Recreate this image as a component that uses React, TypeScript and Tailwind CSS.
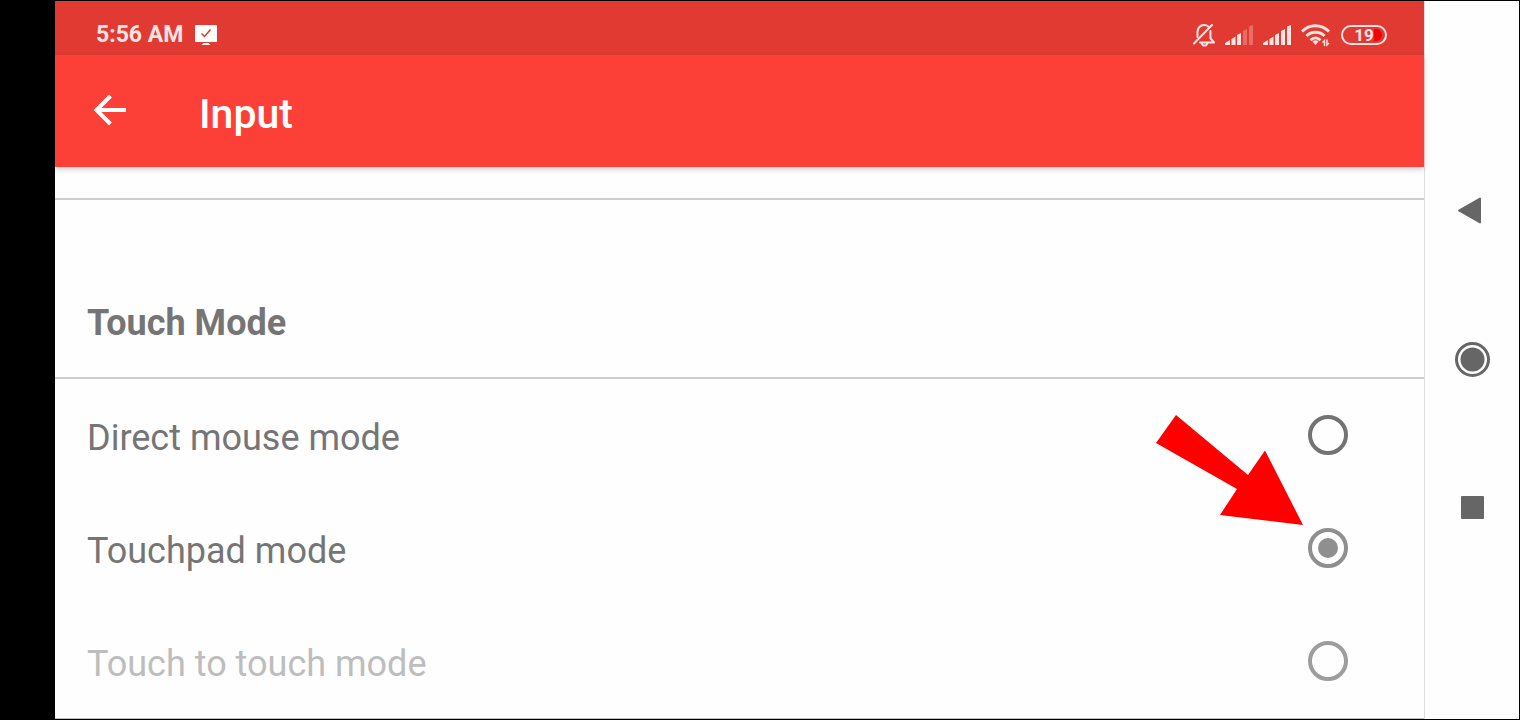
import React, { useState } from "react";

const modes = [
  {
    id: "direct",
    label: "Direct mouse mode",
    text: "text-[#757575]",
    ring: "border-[#737373] before:bg-[#737373]",
  },
  {
    id: "touchpad",
    label: "Touchpad mode",
    text: "text-[#757575]",
    ring: "border-[#8f8f8f] before:bg-[#8f8f8f]",
  },
  {
    id: "touch",
    label: "Touch to touch mode",
    text: "text-[#bdbdbd]",
    ring: "border-[#9d9d9d] before:bg-[#9d9d9d]",
  },
];

function ScreenIcon() {
  return (
    <svg width="22" height="22" viewBox="0 0 22 22" fill="none">
      <rect width="22" height="17" y="1" rx="1" fill="#fff" />
      <path d="M8.500 19h5l2 2h-9z" fill="#fff" />
      <path d="M6.500 9.500l3 3 6-7" stroke="#e03a32" strokeWidth="1.500" />
    </svg>
  );
}

function BellOffIcon() {
  return (
    <svg
      width="22"
      height="24"
      viewBox="0 0 22 24"
      fill="none"
      stroke="#fce4e2"
      strokeWidth="2"
      strokeLinecap="round"
      strokeLinejoin="round"
    >
      <path d="M4.500 14V9c0-4 2.800-7 6.500-7 1.800 0 3.400.6 4.500 1.800" />
      <path d="M17.500 8v7.500l3.500 4H7" />
      <path d="M1 20.500L19 2" />
      <path d="M8.500 20l1.500 2.500h3l1.500-2.500" />
    </svg>
  );
}

function SignalIcon({ bars }: { bars: number }) {
  return (
    <svg width="28" height="20" viewBox="0 0 28 20" fill="#fce4e2">
      <path d="M0 20v-2L5 15v5z" />
      <path d="M6.500 14l4-2.500V20h-4z" />
      <path d="M12 10l4-2v12h-4z" />
      <path d="M18 6l4-2v16h-4z" opacity={bars > 3 ? 1 : 0.3} />
      <path d="M24 1.500l4-1.500v20h-4z" opacity={bars > 4 ? 1 : 0.3} />
    </svg>
  );
}

function WifiIcon() {
  return (
    <svg width="30" height="24" viewBox="0 0 30 24" fill="none">
      <g stroke="#fce4e2" strokeWidth="3">
        <path d="M1 8.500C8.500.8 20 .8 28 8.500" />
        <path d="M5.500 13c5-5 13-5 18 0" />
        <path d="M9.500 17.200c3-3 7-3 10 0" />
      </g>
      <path d="M11.500 18.500c2-1.800 4-1.800 6 0l-3 3.500z" fill="#fce4e2" />
      <path
        d="M21.500 19.500l2-2v5.500M28 20l-2 2v-5.500"
        stroke="#fce4e2"
        strokeWidth="1.500"
      />
    </svg>
  );
}

function StatusBar() {
  return (
    <div className="flex h-[54px] items-center justify-between bg-[#e03a32] pl-[41px] pr-[37px] pt-[14px]">
      <div className="flex items-center gap-3">
        <span className="text-[23px] leading-7 font-bold text-[#fce4e2]">
          5:56 AM
        </span>
        <ScreenIcon />
      </div>
      <div className="flex items-center gap-[10px]">
        <BellOffIcon />
        <SignalIcon bars={3} />
        <SignalIcon bars={5} />
        <WifiIcon />
        <div className="relative flex h-5 w-[46px] items-center justify-center rounded-full border-2 border-[#fce4e2]">
          <span className="absolute right-[3px] h-3 w-2 rounded-r-full bg-[#f00000]"></span>
          <span className="relative text-[17px] leading-4 font-bold text-[#fce4e2]">
            19
          </span>
        </div>
      </div>
    </div>
  );
}

function Toolbar() {
  return (
    <header className="relative flex h-[112px] items-center bg-[#fd4037] pb-[2px] pl-[38px] shadow-[0_2px_6px_rgba(0,0,0,0.2)]">
      <button type="button" aria-label="Back" className="mr-[72px]">
        <svg width="34" height="34" viewBox="0 0 34 34" fill="none">
          <path
            d="M33 17H4M17.500 3L3.500 17l14 14"
            stroke="#fff"
            strokeWidth="4"
          />
        </svg>
      </button>
      <h1 className="pt-2 text-[41px] leading-[48px] font-medium text-white">
        Input
      </h1>
    </header>
  );
}

function Pointer() {
  return (
    <svg
      className="pointer-events-none absolute right-full bottom-full mr-[5px] mb-[3px]"
      width="147"
      height="110"
      viewBox="0 0 147 110"
      fill="#ff0000"
    >
      <path d="M20 0L92 60 109 35.500 147 110 64 100 81 74 0 28z" />
    </svg>
  );
}

function TouchMode() {
  const [selected, setSelected] = useState("touchpad");

  return (
    <section>
      <h2 className="border-y-2 border-[#cecece] px-8 pt-[99px] pb-[30px] text-[36px] leading-[48px] font-bold text-[#757575]">
        Touch Mode
      </h2>
      {modes.map((mode) => (
        <div
          key={mode.id}
          className="flex h-[113px] items-center justify-between pr-[76px] pb-[2px] pl-8"
        >
          <label
            htmlFor={mode.id}
            className={`flex-1 pt-[6px] text-[36px] leading-[48px] ${mode.text}`}
          >
            {mode.label}
          </label>
          <div className="relative flex">
            <input
              type="radio"
              id={mode.id}
              name="touch-mode"
              checked={selected === mode.id}
              onChange={() => setSelected(mode.id)}
              className={`grid size-10 appearance-none place-content-center rounded-full border-4 before:hidden before:size-5 before:rounded-full checked:before:block ${mode.ring}`}
            />
            {mode.id === "touchpad" && <Pointer />}
          </div>
        </div>
      ))}
    </section>
  );
}

function NavBar() {
  return (
    <nav className="flex w-[95px] flex-col items-center justify-center gap-[109px] border-l border-[#dedede] bg-[#fefefe] pb-[2px]">
      <button type="button" aria-label="Back">
        <svg width="40" height="40" viewBox="0 0 40 40">
          <path
            d="M7 20.500L28 8.500v24z"
            fill="#666"
            stroke="#666"
            strokeWidth="2"
            strokeLinejoin="round"
          />
        </svg>
      </button>
      <button type="button" aria-label="Home">
        <svg width="40" height="40" viewBox="0 0 40 40">
          <circle
            cx="20.500"
            cy="20.500"
            r="16"
            fill="none"
            stroke="#666"
            strokeWidth="3"
          />
          <circle cx="20.500" cy="20.500" r="12" fill="#666" />
        </svg>
      </button>
      <button type="button" aria-label="Recent apps">
        <svg width="40" height="40" viewBox="0 0 40 40">
          <rect x="9" y="8" width="23" height="23" rx="1" fill="#666" />
        </svg>
      </button>
    </nav>
  );
}

export default function App() {
  return (
    <div className="flex min-h-screen bg-black pt-px pr-px pb-px pl-[55px] font-[Roboto,sans-serif]">
      <main className="flex-1 border-b border-[#bdbdbd] bg-[#fefefe]">
        <StatusBar />
        <Toolbar />
        <div className="pt-[31px]">
          <TouchMode />
        </div>
      </main>
      <NavBar />
    </div>
  );
}
